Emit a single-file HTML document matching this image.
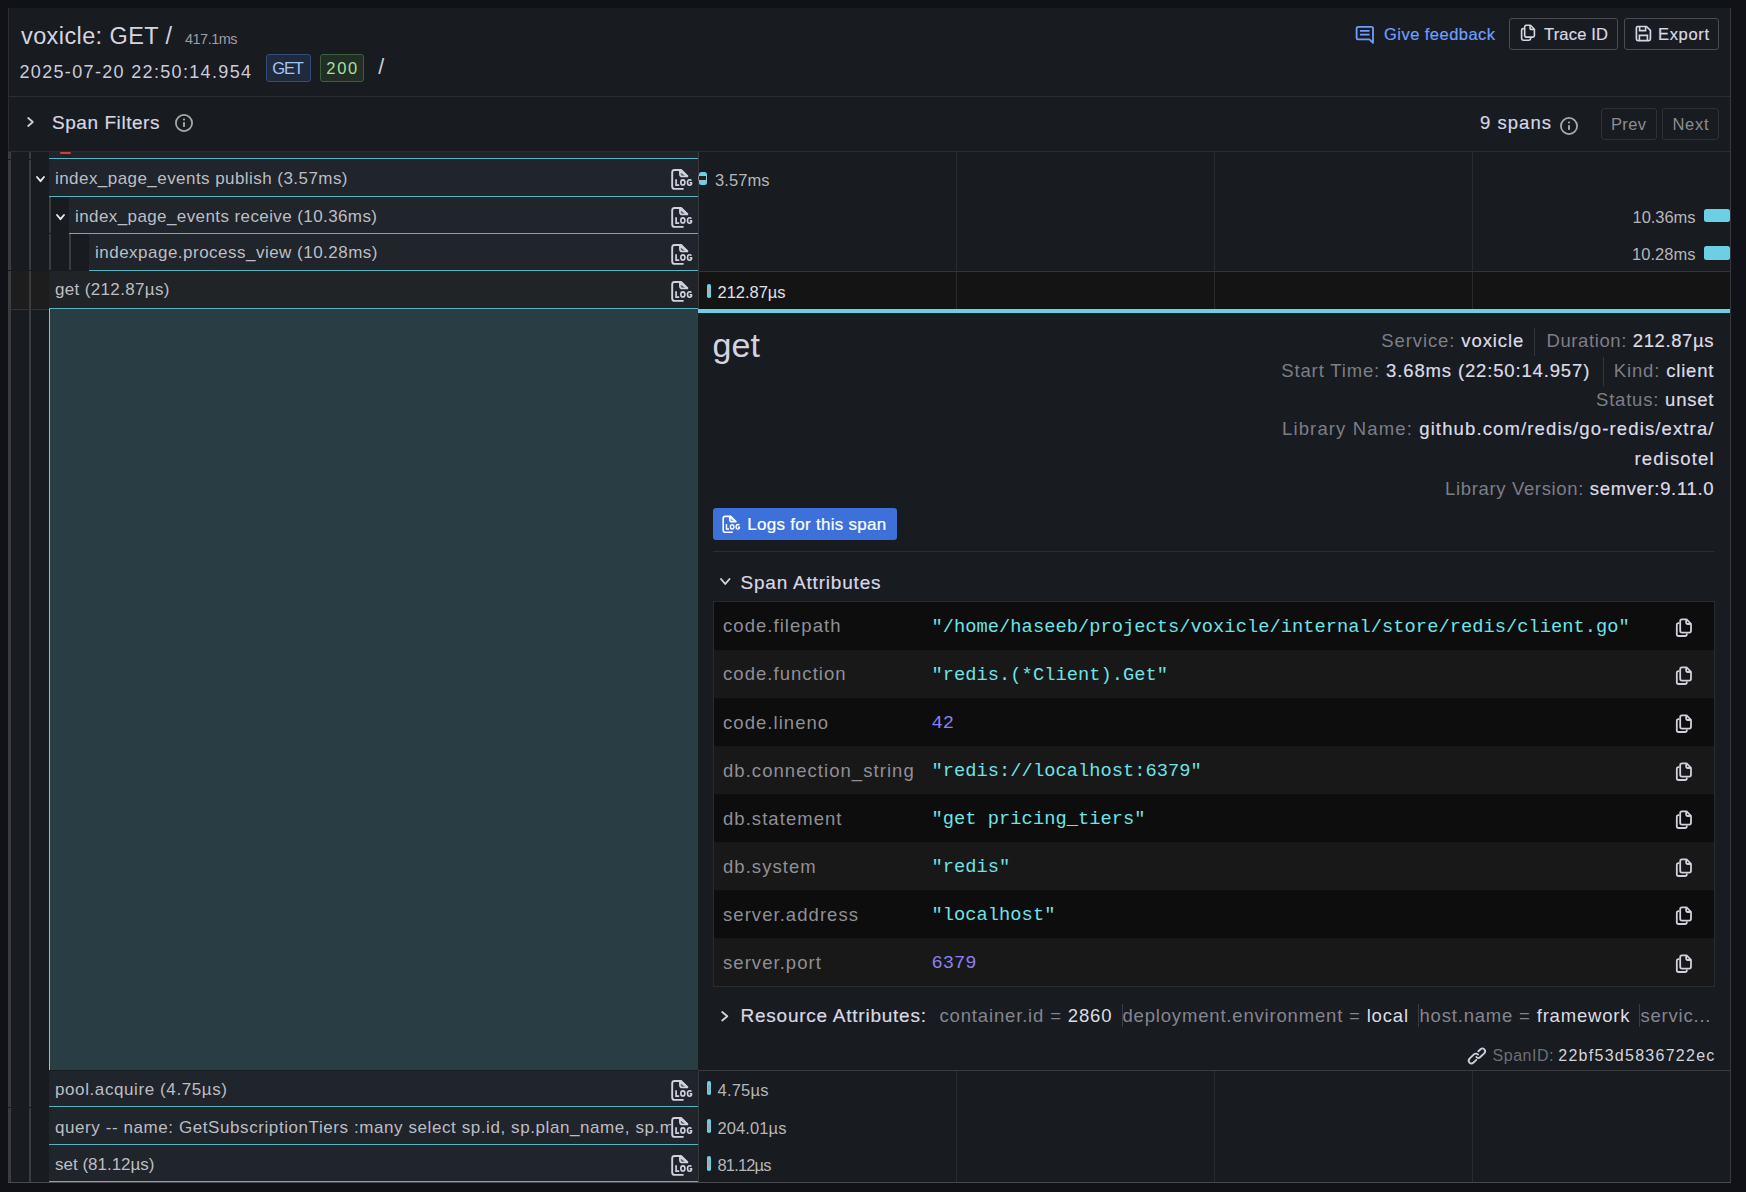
<!DOCTYPE html><html><head><meta charset="utf-8"><style>html,body{margin:0;padding:0;}body{width:1746px;height:1192px;overflow:hidden;background:#111217;position:relative;font-family:"Liberation Sans",sans-serif;}.t{position:absolute;white-space:nowrap;line-height:1;-webkit-font-smoothing:antialiased;}svg{display:block;overflow:visible}</style></head><body>
<div style="position:absolute;left:8px;top:8px;width:1723px;height:1175px;background:#181b1f;"></div>
<div style="position:absolute;left:8px;top:8px;width:1px;height:1175px;background:#2b2d32;"></div>
<div style="position:absolute;left:1730px;top:8px;width:1px;height:1175px;background:#36383c;"></div>
<div class="t" style="left:21.00px;top:24.61px;font-size:23.5px;color:#d4d4e0;letter-spacing:0.397px;font-family:'Liberation Sans',monospace;">voxicle: GET /</div>
<div class="t" style="left:185.00px;top:32.23px;font-size:14.5px;color:#9d9da8;letter-spacing:-0.521px;font-family:'Liberation Sans',monospace;">417.1ms</div>
<div class="t" style="left:19.50px;top:62.76px;font-size:18px;color:#ccccdc;letter-spacing:1.332px;font-family:'Liberation Sans',monospace;">2025-07-20 22:50:14.954</div>
<div style="position:absolute;left:266px;top:54px;width:45px;height:28px;box-sizing:border-box;background:#1f2a3d;border:1px solid #2f4e7e;border-radius:3px;"></div>
<div class="t" style="left:272.30px;top:59.93px;font-size:16.5px;color:#a6c4f5;letter-spacing:-1.211px;font-family:'Liberation Sans',monospace;">GET</div>
<div style="position:absolute;left:320px;top:54px;width:44px;height:28px;box-sizing:border-box;background:#212d25;border:1px solid #38613b;border-radius:3px;"></div>
<div class="t" style="left:326.30px;top:59.93px;font-size:16.5px;color:#a6e09c;letter-spacing:1.734px;font-family:'Liberation Sans',monospace;">200</div>
<div class="t" style="left:378.30px;top:57.00px;font-size:21.5px;color:#d0d0dc;letter-spacing:0.000px;font-family:'Liberation Sans',monospace;">/</div>
<svg style="position:absolute;left:1355px;top:25px;" width="20" height="20" viewBox="0 0 20 20"><path d="M3.2 1.8 H16.4 Q18 1.8 18 3.4 V17.8 L14.4 14.4 H3.2 Q1.6 14.4 1.6 12.8 V3.4 Q1.6 1.8 3.2 1.8 Z" fill="none" stroke="#6e9fff" stroke-width="1.8" stroke-linejoin="round"/><path d="M5 5.8 H14.6 M5 9.6 H14.6" stroke="#6e9fff" stroke-width="1.8"/></svg>
<div class="t" style="left:1384.00px;top:26.03px;font-size:16.5px;color:#6e9fff;letter-spacing:0.460px;font-family:'Liberation Sans',monospace;-webkit-text-stroke:0.2px currentColor;">Give feedback</div>
<div style="position:absolute;left:1509px;top:18px;width:109px;height:32px;box-sizing:border-box;border:1px solid #4a4c52;border-radius:3px;"></div>
<svg style="position:absolute;left:1519.5px;top:24.2px;" width="18" height="19" viewBox="0 0 18 19"><g transform="scale(0.9)" fill="none" stroke="#d6d6e2" stroke-width="1.8" stroke-linejoin="round"><path d="M4.4 5.2 H3.6 Q1.8 5.2 1.8 7 V16.2 Q1.8 18 3.6 18 H10 Q11.8 18 11.8 16.2 V15.6"/><path d="M7 1.4 H11.6 L16 5.8 V12.8 Q16 14.6 14.2 14.6 H7 Q5.2 14.6 5.2 12.8 V3.2 Q5.2 1.4 7 1.4 Z"/><path d="M11.2 1.8 V4.6 Q11.2 6 12.6 6 H15.6"/></g></svg>
<div class="t" style="left:1544.00px;top:26.03px;font-size:16.5px;color:#d8d8e4;letter-spacing:0.192px;font-family:'Liberation Sans',monospace;-webkit-text-stroke:0.2px currentColor;">Trace ID</div>
<div style="position:absolute;left:1624px;top:18px;width:95px;height:32px;box-sizing:border-box;border:1px solid #4a4c52;border-radius:3px;"></div>
<svg style="position:absolute;left:1635px;top:25px;" width="17" height="17" viewBox="0 0 17 17"><path d="M3 1.5 H11.5 L15.4 5.4 V14 Q15.4 15.6 13.8 15.6 H3 Q1.4 15.6 1.4 14 V3.1 Q1.4 1.5 3 1.5 Z" fill="none" stroke="#d6d6e2" stroke-width="1.7" stroke-linejoin="round"/><path d="M4.6 2 V5.6 H10.6 V2" fill="none" stroke="#d6d6e2" stroke-width="1.6"/><path d="M4.4 15.4 V10.4 H12.4 V15.4" fill="none" stroke="#d6d6e2" stroke-width="1.6"/></svg>
<div class="t" style="left:1658.00px;top:26.03px;font-size:16.5px;color:#d8d8e4;letter-spacing:0.662px;font-family:'Liberation Sans',monospace;-webkit-text-stroke:0.2px currentColor;">Export</div>
<div style="position:absolute;left:9px;top:96px;width:1721px;height:1px;background:#2b2d32;"></div>
<svg style="position:absolute;left:27px;top:117px;" width="7" height="10" viewBox="0 0 7 10"><path d="M1.2 1 L5.8 5.0 L1.2 9" fill="none" stroke="#d0d0dc" stroke-width="1.8" stroke-linecap="round" stroke-linejoin="round"/></svg>
<div class="t" style="left:52.00px;top:112.92px;font-size:19px;color:#d6d6e2;letter-spacing:0.557px;font-family:'Liberation Sans',monospace;-webkit-text-stroke:0.2px currentColor;">Span Filters</div>
<svg style="position:absolute;left:174px;top:112.6px;" width="20" height="20" viewBox="0 0 20 20"><circle cx="10" cy="10" r="8.1" fill="none" stroke="#a8a8a8" stroke-width="1.8"/><rect x="9.05" y="8.9" width="1.9" height="5.2" rx="0.9" fill="#a8a8a8"/><circle cx="10" cy="6.5" r="1.1" fill="#a8a8a8"/></svg>
<div class="t" style="left:1480.00px;top:114.14px;font-size:18.5px;color:#d6d6e2;letter-spacing:1.034px;font-family:'Liberation Sans',monospace;-webkit-text-stroke:0.2px currentColor;">9 spans</div>
<svg style="position:absolute;left:1558.5px;top:115.8px;" width="20" height="20" viewBox="0 0 20 20"><circle cx="10" cy="10" r="8.1" fill="none" stroke="#a8a8a8" stroke-width="1.8"/><rect x="9.05" y="8.9" width="1.9" height="5.2" rx="0.9" fill="#a8a8a8"/><circle cx="10" cy="6.5" r="1.1" fill="#a8a8a8"/></svg>
<div style="position:absolute;left:1601px;top:108px;width:56px;height:32px;box-sizing:border-box;border:1px solid #2f3136;border-radius:3px;"></div>
<div class="t" style="left:1611.00px;top:115.53px;font-size:16.5px;color:#8c8c96;letter-spacing:0.354px;font-family:'Liberation Sans',monospace;">Prev</div>
<div style="position:absolute;left:1662px;top:108px;width:57px;height:32px;box-sizing:border-box;border:1px solid #2f3136;border-radius:3px;"></div>
<div class="t" style="left:1672.50px;top:115.53px;font-size:16.5px;color:#8c8c96;letter-spacing:0.688px;font-family:'Liberation Sans',monospace;">Next</div>
<div style="position:absolute;left:9px;top:151px;width:1721px;height:1px;background:#2b2d32;"></div>
<div style="position:absolute;left:956px;top:152px;width:1px;height:1030px;background:#2a2c30;"></div>
<div style="position:absolute;left:1214px;top:152px;width:1px;height:1030px;background:#2a2c30;"></div>
<div style="position:absolute;left:1472px;top:152px;width:1px;height:1030px;background:#2a2c30;"></div>
<div style="position:absolute;left:698px;top:152px;width:1px;height:1030px;background:#38393c;"></div>
<div style="position:absolute;left:8px;top:152px;width:3px;height:1031px;background:#3b3c3e;"></div>
<div style="position:absolute;left:29px;top:152px;width:2px;height:1030px;background:#3b3c3e;"></div>
<div style="position:absolute;left:49px;top:152px;width:649px;height:6px;background:#1f252b;"></div>
<div style="position:absolute;left:60px;top:152px;width:11px;height:1.6px;background:#e0383a;border-radius:1px;"></div>
<div style="position:absolute;left:49px;top:158px;width:649px;height:1.33px;background:#5ab3c2;"></div>
<div style="position:absolute;left:49px;top:159.33px;width:649px;height:36.66999999999999px;background:#1f252b;"></div>
<div style="position:absolute;left:49px;top:196px;width:649px;height:1.33px;background:#5ab3c2;"></div>
<svg style="position:absolute;left:35.7px;top:175.70000000000002px;" width="9" height="6.2" viewBox="0 0 9 6.2"><path d="M1 1 L4.5 5.2 L8 1" fill="none" stroke="#e8e8f0" stroke-width="1.9" stroke-linecap="round" stroke-linejoin="round"/></svg>
<div style="position:absolute;left:49px;top:159.33px;width:622px;height:36.66999999999999px;overflow:hidden">
<div class="t" style="left:6.00px;top:10.18px;font-size:17px;color:#bdbdc3;letter-spacing:0.444px;font-family:'Liberation Sans',monospace;">index_page_events publish (3.57ms)</div>
</div>
<svg style="position:absolute;left:666px;top:165.73000000000002px;" width="30" height="30" viewBox="0 0 30 30"><g transform="scale(1.0)" fill="none" stroke="#d2d2de" stroke-linejoin="round"><path d="M17.6 22.9 H8.6 Q6.2 22.9 6.2 20.5 V6.4 Q6.2 4 8.6 4 H15.1 L21.7 10.4" stroke-width="1.9"/><path d="M13.9 4.8 V8 Q13.9 10.5 16.4 10.5 H21.4 Z" stroke-width="1.7" fill="#d2d2de" fill-opacity="0.35"/><path d="M10.1 13.2 V19.1 H13.2" stroke-width="1.7" stroke-linejoin="miter"/><ellipse cx="16.85" cy="16.45" rx="2.05" ry="2.6" stroke-width="1.6"/><path d="M25.4 14.6 Q24.9 13.7 23.6 13.7 Q21.5 13.7 21.5 16.45 Q21.5 19.2 23.6 19.2 Q25.6 19.2 25.6 16.8 H23.7" stroke-width="1.6"/></g></svg>
<div style="position:absolute;left:49px;top:197.33px;width:2px;height:36px;background:#3b3c3e;"></div>
<div style="position:absolute;left:69px;top:197.33px;width:629px;height:35.66999999999999px;background:#1f252b;"></div>
<div style="position:absolute;left:69px;top:233px;width:629px;height:1.33px;background:#5ab3c2;"></div>
<svg style="position:absolute;left:55.7px;top:213.70000000000002px;" width="9" height="6.2" viewBox="0 0 9 6.2"><path d="M1 1 L4.5 5.2 L8 1" fill="none" stroke="#e8e8f0" stroke-width="1.9" stroke-linecap="round" stroke-linejoin="round"/></svg>
<div style="position:absolute;left:69px;top:197.33px;width:602px;height:35.66999999999999px;overflow:hidden">
<div class="t" style="left:6.00px;top:10.18px;font-size:17px;color:#bdbdc3;letter-spacing:0.405px;font-family:'Liberation Sans',monospace;">index_page_events receive (10.36ms)</div>
</div>
<svg style="position:absolute;left:666px;top:203.73000000000002px;" width="30" height="30" viewBox="0 0 30 30"><g transform="scale(1.0)" fill="none" stroke="#d2d2de" stroke-linejoin="round"><path d="M17.6 22.9 H8.6 Q6.2 22.9 6.2 20.5 V6.4 Q6.2 4 8.6 4 H15.1 L21.7 10.4" stroke-width="1.9"/><path d="M13.9 4.8 V8 Q13.9 10.5 16.4 10.5 H21.4 Z" stroke-width="1.7" fill="#d2d2de" fill-opacity="0.35"/><path d="M10.1 13.2 V19.1 H13.2" stroke-width="1.7" stroke-linejoin="miter"/><ellipse cx="16.85" cy="16.45" rx="2.05" ry="2.6" stroke-width="1.6"/><path d="M25.4 14.6 Q24.9 13.7 23.6 13.7 Q21.5 13.7 21.5 16.45 Q21.5 19.2 23.6 19.2 Q25.6 19.2 25.6 16.8 H23.7" stroke-width="1.6"/></g></svg>
<div style="position:absolute;left:49px;top:234.33px;width:2px;height:36px;background:#3b3c3e;"></div>
<div style="position:absolute;left:69px;top:234.33px;width:2px;height:36px;background:#3b3c3e;"></div>
<div style="position:absolute;left:89px;top:234.33px;width:609px;height:35.66999999999999px;background:#1f252b;"></div>
<div style="position:absolute;left:89px;top:270px;width:609px;height:1.33px;background:#5ab3c2;"></div>
<div style="position:absolute;left:89px;top:234.33px;width:582px;height:35.66999999999999px;overflow:hidden">
<div class="t" style="left:6.00px;top:9.98px;font-size:17px;color:#bdbdc3;letter-spacing:0.486px;font-family:'Liberation Sans',monospace;">indexpage.process_view (10.28ms)</div>
</div>
<svg style="position:absolute;left:666px;top:240.73000000000002px;" width="30" height="30" viewBox="0 0 30 30"><g transform="scale(1.0)" fill="none" stroke="#d2d2de" stroke-linejoin="round"><path d="M17.6 22.9 H8.6 Q6.2 22.9 6.2 20.5 V6.4 Q6.2 4 8.6 4 H15.1 L21.7 10.4" stroke-width="1.9"/><path d="M13.9 4.8 V8 Q13.9 10.5 16.4 10.5 H21.4 Z" stroke-width="1.7" fill="#d2d2de" fill-opacity="0.35"/><path d="M10.1 13.2 V19.1 H13.2" stroke-width="1.7" stroke-linejoin="miter"/><ellipse cx="16.85" cy="16.45" rx="2.05" ry="2.6" stroke-width="1.6"/><path d="M25.4 14.6 Q24.9 13.7 23.6 13.7 Q21.5 13.7 21.5 16.45 Q21.5 19.2 23.6 19.2 Q25.6 19.2 25.6 16.8 H23.7" stroke-width="1.6"/></g></svg>
<div style="position:absolute;left:11px;top:271.33px;width:18px;height:37px;background:#1d1d1d;"></div>
<div style="position:absolute;left:31px;top:271.33px;width:18px;height:37px;background:#1d1d1d;"></div>
<div style="position:absolute;left:11px;top:309px;width:38px;height:1px;background:#343434;"></div>
<div style="position:absolute;left:49px;top:271.33px;width:649px;height:36.67px;background:#202427;"></div>
<div style="position:absolute;left:49px;top:308px;width:649px;height:1.33px;background:#5ab3c2;"></div>
<div class="t" style="left:55.00px;top:281.41px;font-size:17px;color:#bdbdc3;letter-spacing:0.349px;font-family:'Liberation Sans',monospace;">get (212.87µs)</div>
<svg style="position:absolute;left:666px;top:277.6px;" width="30" height="30" viewBox="0 0 30 30"><g transform="scale(1.0)" fill="none" stroke="#d2d2de" stroke-linejoin="round"><path d="M17.6 22.9 H8.6 Q6.2 22.9 6.2 20.5 V6.4 Q6.2 4 8.6 4 H15.1 L21.7 10.4" stroke-width="1.9"/><path d="M13.9 4.8 V8 Q13.9 10.5 16.4 10.5 H21.4 Z" stroke-width="1.7" fill="#d2d2de" fill-opacity="0.35"/><path d="M10.1 13.2 V19.1 H13.2" stroke-width="1.7" stroke-linejoin="miter"/><ellipse cx="16.85" cy="16.45" rx="2.05" ry="2.6" stroke-width="1.6"/><path d="M25.4 14.6 Q24.9 13.7 23.6 13.7 Q21.5 13.7 21.5 16.45 Q21.5 19.2 23.6 19.2 Q25.6 19.2 25.6 16.8 H23.7" stroke-width="1.6"/></g></svg>
<div style="position:absolute;left:699px;top:272px;width:1031px;height:36.5px;background:#141414;"></div>
<div style="position:absolute;left:956px;top:272px;width:1px;height:36.5px;background:#2a2a2a;"></div>
<div style="position:absolute;left:1214px;top:272px;width:1px;height:36.5px;background:#2a2a2a;"></div>
<div style="position:absolute;left:1472px;top:272px;width:1px;height:36.5px;background:#2a2a2a;"></div>
<div style="position:absolute;left:699px;top:271px;width:1031px;height:1px;background:#333437;"></div>
<div style="position:absolute;left:698.5px;top:172.2px;width:8.6px;height:12.6px;background:#6ccfe3;border-radius:2.5px;"></div>
<div style="position:absolute;left:699.4px;top:176px;width:6.8px;height:4px;background:#222;box-shadow:0 0 0 0.6px #bbb;"></div>
<div class="t" style="left:715.00px;top:172.03px;font-size:16.5px;color:#b6b6b8;letter-spacing:0.078px;font-family:'Liberation Sans',monospace;">3.57ms</div>
<div class="t" style="right:50.55px;top:208.83px;font-size:16.5px;color:#b6b6b8;letter-spacing:-0.049px;font-family:'Liberation Sans',monospace;">10.36ms</div>
<div style="position:absolute;left:1704px;top:209px;width:26.3px;height:13px;background:#6ccfe3;border-radius:2.5px;"></div>
<div class="t" style="right:50.47px;top:246.03px;font-size:16.5px;color:#b6b6b8;letter-spacing:0.034px;font-family:'Liberation Sans',monospace;">10.28ms</div>
<div style="position:absolute;left:1704px;top:246.3px;width:26.3px;height:13.7px;background:#6ccfe3;border-radius:2.5px;"></div>
<div style="position:absolute;left:707px;top:284px;width:3.6px;height:13.5px;background:#6ccfe3;border-radius:1.8px;"></div>
<div style="position:absolute;left:708px;top:288px;width:1.6px;height:6px;background:#b0b0b0;"></div>
<div class="t" style="left:717.50px;top:283.53px;font-size:16.5px;color:#e0e0e6;letter-spacing:-0.033px;font-family:'Liberation Sans',monospace;">212.87µs</div>
<div style="position:absolute;left:49px;top:309.4px;width:649px;height:760.6px;background:#293d44;"></div>
<div style="position:absolute;left:49px;top:309.4px;width:1.2px;height:760.6px;background:#6ccfe3;"></div>
<div style="position:absolute;left:698px;top:309.4px;width:1032px;height:760.6px;background:#181b1f;"></div>
<div style="position:absolute;left:698px;top:309px;width:1032px;height:4px;background:#6ccfe3;"></div>
<div style="position:absolute;left:698px;top:1069.5px;width:1032px;height:1px;background:#3a3b3e;"></div>
<div class="t" style="left:712.50px;top:328.32px;font-size:34px;color:#d4d4e0;letter-spacing:0.117px;font-family:'Liberation Sans',monospace;">get</div>
<div class="t" style="left:1381.30px;top:332.04px;font-size:18.5px;color:#dcdce6;letter-spacing:0.898px;font-family:'Liberation Sans',monospace;"><span style="color:#7e7e87">Service:</span> <span style="color:#dcdce6;-webkit-text-stroke:0.2px #dcdce6">voxicle</span></div>
<div style="position:absolute;left:1534px;top:327.5px;width:1px;height:28.5px;background:#33353a;"></div>
<div class="t" style="left:1546.50px;top:332.04px;font-size:18.5px;color:#dcdce6;letter-spacing:0.605px;font-family:'Liberation Sans',monospace;"><span style="color:#7e7e87">Duration:</span> <span style="color:#dcdce6;-webkit-text-stroke:0.2px #dcdce6">212.87µs</span></div>
<div class="t" style="left:1281.30px;top:361.94px;font-size:18.5px;color:#dcdce6;letter-spacing:0.852px;font-family:'Liberation Sans',monospace;"><span style="color:#7e7e87">Start Time:</span> <span style="color:#dcdce6;-webkit-text-stroke:0.2px #dcdce6">3.68ms (22:50:14.957)</span></div>
<div style="position:absolute;left:1602.5px;top:356.5px;width:1px;height:29.5px;background:#33353a;"></div>
<div class="t" style="left:1613.80px;top:361.94px;font-size:18.5px;color:#dcdce6;letter-spacing:0.835px;font-family:'Liberation Sans',monospace;"><span style="color:#7e7e87">Kind:</span> <span style="color:#dcdce6;-webkit-text-stroke:0.2px #dcdce6">client</span></div>
<div class="t" style="left:1596.00px;top:390.94px;font-size:18.5px;color:#dcdce6;letter-spacing:0.792px;font-family:'Liberation Sans',monospace;"><span style="color:#7e7e87">Status:</span> <span style="color:#dcdce6;-webkit-text-stroke:0.2px #dcdce6">unset</span></div>
<div class="t" style="left:1282.00px;top:420.24px;font-size:18.5px;color:#dcdce6;letter-spacing:1.134px;font-family:'Liberation Sans',monospace;"><span style="color:#7e7e87">Library Name:</span> <span style="color:#dcdce6;-webkit-text-stroke:0.2px #dcdce6">github.com/redis/go-redis/extra/</span></div>
<div class="t" style="left:1634.50px;top:450.04px;font-size:18.5px;color:#dcdce6;letter-spacing:1.133px;font-family:'Liberation Sans',monospace;-webkit-text-stroke:0.2px currentColor;">redisotel</div>
<div class="t" style="left:1445.00px;top:479.54px;font-size:18.5px;color:#dcdce6;letter-spacing:0.654px;font-family:'Liberation Sans',monospace;"><span style="color:#7e7e87">Library Version:</span> <span style="color:#dcdce6;-webkit-text-stroke:0.2px #dcdce6">semver:9.11.0</span></div>
<div style="position:absolute;left:713px;top:508.2px;width:184px;height:31.6px;background:#3d71d9;border-radius:3px;"></div>
<svg style="position:absolute;left:718px;top:512.5px;" width="25" height="25" viewBox="0 0 25 25"><g transform="scale(0.84)" fill="none" stroke="#ffffff" stroke-linejoin="round"><path d="M17.6 22.9 H8.6 Q6.2 22.9 6.2 20.5 V6.4 Q6.2 4 8.6 4 H15.1 L21.7 10.4" stroke-width="1.9"/><path d="M13.9 4.8 V8 Q13.9 10.5 16.4 10.5 H21.4 Z" stroke-width="1.7" fill="#ffffff" fill-opacity="0.35"/><path d="M10.1 13.2 V19.1 H13.2" stroke-width="1.7" stroke-linejoin="miter"/><ellipse cx="16.85" cy="16.45" rx="2.05" ry="2.6" stroke-width="1.6"/><path d="M25.4 14.6 Q24.9 13.7 23.6 13.7 Q21.5 13.7 21.5 16.45 Q21.5 19.2 23.6 19.2 Q25.6 19.2 25.6 16.8 H23.7" stroke-width="1.6"/></g></svg>
<div class="t" style="left:747.30px;top:515.71px;font-size:17px;color:#ffffff;letter-spacing:0.282px;font-family:'Liberation Sans',monospace;-webkit-text-stroke:0.2px currentColor;">Logs for this span</div>
<div style="position:absolute;left:713px;top:551px;width:1001px;height:1px;background:#2c2e33;"></div>
<svg style="position:absolute;left:719.5px;top:577.6px;" width="10.5" height="7" viewBox="0 0 10.5 7"><path d="M1 1 L5.25 6 L9.5 1" fill="none" stroke="#d4d4e0" stroke-width="1.9" stroke-linecap="round" stroke-linejoin="round"/></svg>
<div class="t" style="left:740.50px;top:572.52px;font-size:19px;color:#d8d8e4;letter-spacing:0.795px;font-family:'Liberation Sans',monospace;-webkit-text-stroke:0.2px currentColor;">Span Attributes</div>
<div style="position:absolute;left:713px;top:600.5px;width:1002px;height:386.64px;box-sizing:border-box;border:1px solid #2a2b2e;"></div>
<div style="position:absolute;left:714px;top:601.5px;width:1000px;height:48.08px;background:#0d0d0d;"></div>
<div class="t" style="left:723.00px;top:617.34px;font-size:18.5px;color:#8f8f96;letter-spacing:1.050px;font-family:'Liberation Sans',monospace;">code.filepath</div>
<div class="t" style="left:931.50px;top:617.93px;font-size:18.7px;color:#6fe3e6;letter-spacing:0.050px;font-family:'Liberation Mono',monospace;">&quot;/home/haseeb/projects/voxicle/internal/store/redis/client.go&quot;</div>
<svg style="position:absolute;left:1675.3px;top:617.7px;" width="20" height="21" viewBox="0 0 20 21"><g transform="scale(1.0)" fill="none" stroke="#d0d0de" stroke-width="1.8" stroke-linejoin="round"><path d="M4.4 5.2 H3.6 Q1.8 5.2 1.8 7 V16.2 Q1.8 18 3.6 18 H10 Q11.8 18 11.8 16.2 V15.6"/><path d="M7 1.4 H11.6 L16 5.8 V12.8 Q16 14.6 14.2 14.6 H7 Q5.2 14.6 5.2 12.8 V3.2 Q5.2 1.4 7 1.4 Z"/><path d="M11.2 1.8 V4.6 Q11.2 6 12.6 6 H15.6"/></g></svg>
<div style="position:absolute;left:714px;top:649.58px;width:1000px;height:48.08px;background:#181818;"></div>
<div class="t" style="left:723.00px;top:665.42px;font-size:18.5px;color:#8f8f96;letter-spacing:1.050px;font-family:'Liberation Sans',monospace;">code.function</div>
<div class="t" style="left:931.50px;top:666.01px;font-size:18.7px;color:#6fe3e6;letter-spacing:0.050px;font-family:'Liberation Mono',monospace;">&quot;redis.(*Client).Get&quot;</div>
<svg style="position:absolute;left:1675.3px;top:665.7800000000001px;" width="20" height="21" viewBox="0 0 20 21"><g transform="scale(1.0)" fill="none" stroke="#d0d0de" stroke-width="1.8" stroke-linejoin="round"><path d="M4.4 5.2 H3.6 Q1.8 5.2 1.8 7 V16.2 Q1.8 18 3.6 18 H10 Q11.8 18 11.8 16.2 V15.6"/><path d="M7 1.4 H11.6 L16 5.8 V12.8 Q16 14.6 14.2 14.6 H7 Q5.2 14.6 5.2 12.8 V3.2 Q5.2 1.4 7 1.4 Z"/><path d="M11.2 1.8 V4.6 Q11.2 6 12.6 6 H15.6"/></g></svg>
<div style="position:absolute;left:714px;top:697.66px;width:1000px;height:48.08px;background:#0d0d0d;"></div>
<div class="t" style="left:723.00px;top:713.50px;font-size:18.5px;color:#8f8f96;letter-spacing:1.050px;font-family:'Liberation Sans',monospace;">code.lineno</div>
<div class="t" style="left:931.50px;top:714.09px;font-size:18.7px;color:#8a80f2;letter-spacing:0.050px;font-family:'Liberation Mono',monospace;">42</div>
<svg style="position:absolute;left:1675.3px;top:713.86px;" width="20" height="21" viewBox="0 0 20 21"><g transform="scale(1.0)" fill="none" stroke="#d0d0de" stroke-width="1.8" stroke-linejoin="round"><path d="M4.4 5.2 H3.6 Q1.8 5.2 1.8 7 V16.2 Q1.8 18 3.6 18 H10 Q11.8 18 11.8 16.2 V15.6"/><path d="M7 1.4 H11.6 L16 5.8 V12.8 Q16 14.6 14.2 14.6 H7 Q5.2 14.6 5.2 12.8 V3.2 Q5.2 1.4 7 1.4 Z"/><path d="M11.2 1.8 V4.6 Q11.2 6 12.6 6 H15.6"/></g></svg>
<div style="position:absolute;left:714px;top:745.74px;width:1000px;height:48.08px;background:#181818;"></div>
<div class="t" style="left:723.00px;top:761.58px;font-size:18.5px;color:#8f8f96;letter-spacing:1.050px;font-family:'Liberation Sans',monospace;">db.connection_string</div>
<div class="t" style="left:931.50px;top:762.17px;font-size:18.7px;color:#6fe3e6;letter-spacing:0.050px;font-family:'Liberation Mono',monospace;">&quot;redis://localhost:6379&quot;</div>
<svg style="position:absolute;left:1675.3px;top:761.94px;" width="20" height="21" viewBox="0 0 20 21"><g transform="scale(1.0)" fill="none" stroke="#d0d0de" stroke-width="1.8" stroke-linejoin="round"><path d="M4.4 5.2 H3.6 Q1.8 5.2 1.8 7 V16.2 Q1.8 18 3.6 18 H10 Q11.8 18 11.8 16.2 V15.6"/><path d="M7 1.4 H11.6 L16 5.8 V12.8 Q16 14.6 14.2 14.6 H7 Q5.2 14.6 5.2 12.8 V3.2 Q5.2 1.4 7 1.4 Z"/><path d="M11.2 1.8 V4.6 Q11.2 6 12.6 6 H15.6"/></g></svg>
<div style="position:absolute;left:714px;top:793.8199999999999px;width:1000px;height:48.08px;background:#0d0d0d;"></div>
<div class="t" style="left:723.00px;top:809.66px;font-size:18.5px;color:#8f8f96;letter-spacing:1.050px;font-family:'Liberation Sans',monospace;">db.statement</div>
<div class="t" style="left:931.50px;top:810.25px;font-size:18.7px;color:#6fe3e6;letter-spacing:0.050px;font-family:'Liberation Mono',monospace;">&quot;get pricing_tiers&quot;</div>
<svg style="position:absolute;left:1675.3px;top:810.02px;" width="20" height="21" viewBox="0 0 20 21"><g transform="scale(1.0)" fill="none" stroke="#d0d0de" stroke-width="1.8" stroke-linejoin="round"><path d="M4.4 5.2 H3.6 Q1.8 5.2 1.8 7 V16.2 Q1.8 18 3.6 18 H10 Q11.8 18 11.8 16.2 V15.6"/><path d="M7 1.4 H11.6 L16 5.8 V12.8 Q16 14.6 14.2 14.6 H7 Q5.2 14.6 5.2 12.8 V3.2 Q5.2 1.4 7 1.4 Z"/><path d="M11.2 1.8 V4.6 Q11.2 6 12.6 6 H15.6"/></g></svg>
<div style="position:absolute;left:714px;top:841.9px;width:1000px;height:48.08px;background:#181818;"></div>
<div class="t" style="left:723.00px;top:857.74px;font-size:18.5px;color:#8f8f96;letter-spacing:1.050px;font-family:'Liberation Sans',monospace;">db.system</div>
<div class="t" style="left:931.50px;top:858.33px;font-size:18.7px;color:#6fe3e6;letter-spacing:0.050px;font-family:'Liberation Mono',monospace;">&quot;redis&quot;</div>
<svg style="position:absolute;left:1675.3px;top:858.1px;" width="20" height="21" viewBox="0 0 20 21"><g transform="scale(1.0)" fill="none" stroke="#d0d0de" stroke-width="1.8" stroke-linejoin="round"><path d="M4.4 5.2 H3.6 Q1.8 5.2 1.8 7 V16.2 Q1.8 18 3.6 18 H10 Q11.8 18 11.8 16.2 V15.6"/><path d="M7 1.4 H11.6 L16 5.8 V12.8 Q16 14.6 14.2 14.6 H7 Q5.2 14.6 5.2 12.8 V3.2 Q5.2 1.4 7 1.4 Z"/><path d="M11.2 1.8 V4.6 Q11.2 6 12.6 6 H15.6"/></g></svg>
<div style="position:absolute;left:714px;top:889.98px;width:1000px;height:48.08px;background:#0d0d0d;"></div>
<div class="t" style="left:723.00px;top:905.82px;font-size:18.5px;color:#8f8f96;letter-spacing:1.050px;font-family:'Liberation Sans',monospace;">server.address</div>
<div class="t" style="left:931.50px;top:906.41px;font-size:18.7px;color:#6fe3e6;letter-spacing:0.050px;font-family:'Liberation Mono',monospace;">&quot;localhost&quot;</div>
<svg style="position:absolute;left:1675.3px;top:906.1800000000001px;" width="20" height="21" viewBox="0 0 20 21"><g transform="scale(1.0)" fill="none" stroke="#d0d0de" stroke-width="1.8" stroke-linejoin="round"><path d="M4.4 5.2 H3.6 Q1.8 5.2 1.8 7 V16.2 Q1.8 18 3.6 18 H10 Q11.8 18 11.8 16.2 V15.6"/><path d="M7 1.4 H11.6 L16 5.8 V12.8 Q16 14.6 14.2 14.6 H7 Q5.2 14.6 5.2 12.8 V3.2 Q5.2 1.4 7 1.4 Z"/><path d="M11.2 1.8 V4.6 Q11.2 6 12.6 6 H15.6"/></g></svg>
<div style="position:absolute;left:714px;top:938.06px;width:1000px;height:48.08px;background:#181818;"></div>
<div class="t" style="left:723.00px;top:953.90px;font-size:18.5px;color:#8f8f96;letter-spacing:1.050px;font-family:'Liberation Sans',monospace;">server.port</div>
<div class="t" style="left:931.50px;top:954.49px;font-size:18.7px;color:#8a80f2;letter-spacing:0.050px;font-family:'Liberation Mono',monospace;">6379</div>
<svg style="position:absolute;left:1675.3px;top:954.26px;" width="20" height="21" viewBox="0 0 20 21"><g transform="scale(1.0)" fill="none" stroke="#d0d0de" stroke-width="1.8" stroke-linejoin="round"><path d="M4.4 5.2 H3.6 Q1.8 5.2 1.8 7 V16.2 Q1.8 18 3.6 18 H10 Q11.8 18 11.8 16.2 V15.6"/><path d="M7 1.4 H11.6 L16 5.8 V12.8 Q16 14.6 14.2 14.6 H7 Q5.2 14.6 5.2 12.8 V3.2 Q5.2 1.4 7 1.4 Z"/><path d="M11.2 1.8 V4.6 Q11.2 6 12.6 6 H15.6"/></g></svg>
<svg style="position:absolute;left:721px;top:1010.5px;" width="7.5" height="10.5" viewBox="0 0 7.5 10.5"><path d="M1.2 1 L6.3 5.25 L1.2 9.5" fill="none" stroke="#d4d4e0" stroke-width="1.8" stroke-linecap="round" stroke-linejoin="round"/></svg>
<div class="t" style="left:740.50px;top:1005.92px;font-size:19px;color:#d8d8e4;letter-spacing:0.758px;font-family:'Liberation Sans',monospace;-webkit-text-stroke:0.2px currentColor;">Resource Attributes:</div>
<div class="t" style="left:939.50px;top:1006.84px;font-size:18.5px;color:#85858f;letter-spacing:0.840px;font-family:'Liberation Sans',monospace;"><span style="color:#85858f">container.id = </span><span style="color:#dcdce6">2860</span></div>
<div style="position:absolute;left:1121.5px;top:1004px;width:1px;height:23px;background:#3a3c40;"></div>
<div class="t" style="left:1122.50px;top:1006.84px;font-size:18.5px;color:#85858f;letter-spacing:0.820px;font-family:'Liberation Sans',monospace;"><span style="color:#85858f">deployment.environment = </span><span style="color:#dcdce6">local</span></div>
<div style="position:absolute;left:1418px;top:1004px;width:1px;height:23px;background:#3a3c40;"></div>
<div class="t" style="left:1419.50px;top:1006.84px;font-size:18.5px;color:#85858f;letter-spacing:0.809px;font-family:'Liberation Sans',monospace;"><span style="color:#85858f">host.name = </span><span style="color:#dcdce6">framework</span></div>
<div style="position:absolute;left:1639.4px;top:1004px;width:1px;height:23px;background:#3a3c40;"></div>
<div class="t" style="left:1640.50px;top:1006.84px;font-size:18.5px;color:#85858f;letter-spacing:0.783px;font-family:'Liberation Sans',monospace;"><span style="color:#85858f">servic...</span></div>
<svg style="position:absolute;left:1460px;top:1040px;" width="40" height="30" viewBox="0 0 40 30"><g transform="translate(16.9 15.9) scale(0.8) translate(-16 -15.9)"><path d="M15.3 20.9 L11.8 24.2 Q9.1 26.6 6.7 24.2 Q4.4 21.6 7.1 19 L11.9 14.3 Q14.6 11.9 17.4 14.2" fill="none" stroke="#cfcfdc" stroke-width="2.35" stroke-linecap="round"/><path d="M17.8 10.1 L20.6 7.6 Q23.3 5.3 25.5 7.9 Q27.5 10.5 24.8 13.1 L19.9 17.6 Q17.2 19.9 15.3 17.3" fill="none" stroke="#cfcfdc" stroke-width="2.35" stroke-linecap="round"/></g></svg>
<div class="t" style="left:1492.50px;top:1047.86px;font-size:16px;color:#6f6f78;letter-spacing:0.531px;font-family:'Liberation Sans',monospace;">SpanID:</div>
<div class="t" style="left:1558.30px;top:1047.86px;font-size:16px;color:#d4d4de;letter-spacing:1.265px;font-family:'Liberation Sans',monospace;">22bf53d5836722ec</div>
<div style="position:absolute;left:8px;top:158.6px;width:3px;height:1px;background:#17191c;"></div>
<div style="position:absolute;left:29px;top:158.6px;width:2px;height:1px;background:#17191c;"></div>
<div style="position:absolute;left:8px;top:270.3px;width:3px;height:1px;background:#17191c;"></div>
<div style="position:absolute;left:29px;top:270.3px;width:2px;height:1px;background:#17191c;"></div>
<div style="position:absolute;left:8px;top:1106.6px;width:3px;height:1px;background:#17191c;"></div>
<div style="position:absolute;left:29px;top:1106.6px;width:2px;height:1px;background:#17191c;"></div>
<div style="position:absolute;left:956px;top:1071px;width:1px;height:111px;background:#2a2c30;"></div>
<div style="position:absolute;left:1214px;top:1071px;width:1px;height:111px;background:#2a2c30;"></div>
<div style="position:absolute;left:1472px;top:1071px;width:1px;height:111px;background:#2a2c30;"></div>
<div style="position:absolute;left:49px;top:1071px;width:649px;height:35px;background:#1f252b;"></div>
<div style="position:absolute;left:49px;top:1106px;width:649px;height:1.33px;background:#5ab3c2;"></div>
<div style="position:absolute;left:49px;top:1071px;width:622px;height:35px;overflow:hidden">
<div class="t" style="left:6.00px;top:9.61px;font-size:17px;color:#bdbdc3;letter-spacing:0.597px;font-family:'Liberation Sans',monospace;">pool.acquire (4.75µs)</div>
</div>
<svg style="position:absolute;left:666px;top:1077.4px;" width="30" height="30" viewBox="0 0 30 30"><g transform="scale(1.0)" fill="none" stroke="#d2d2de" stroke-linejoin="round"><path d="M17.6 22.9 H8.6 Q6.2 22.9 6.2 20.5 V6.4 Q6.2 4 8.6 4 H15.1 L21.7 10.4" stroke-width="1.9"/><path d="M13.9 4.8 V8 Q13.9 10.5 16.4 10.5 H21.4 Z" stroke-width="1.7" fill="#d2d2de" fill-opacity="0.35"/><path d="M10.1 13.2 V19.1 H13.2" stroke-width="1.7" stroke-linejoin="miter"/><ellipse cx="16.85" cy="16.45" rx="2.05" ry="2.6" stroke-width="1.6"/><path d="M25.4 14.6 Q24.9 13.7 23.6 13.7 Q21.5 13.7 21.5 16.45 Q21.5 19.2 23.6 19.2 Q25.6 19.2 25.6 16.8 H23.7" stroke-width="1.6"/></g></svg>
<div style="position:absolute;left:707px;top:1080.8px;width:3.6px;height:14.5px;background:#6ccfe3;border-radius:1.8px;"></div>
<div style="position:absolute;left:708px;top:1084.5px;width:1.6px;height:7px;background:#a8a8a8;"></div>
<div class="t" style="left:717.50px;top:1081.93px;font-size:16.5px;color:#b6b6b8;letter-spacing:0.225px;font-family:'Liberation Sans',monospace;">4.75µs</div>
<div style="position:absolute;left:49px;top:1107.33px;width:649px;height:36.67000000000007px;background:#1f252b;"></div>
<div style="position:absolute;left:49px;top:1144px;width:649px;height:1.33px;background:#5ab3c2;"></div>
<div style="position:absolute;left:49px;top:1107.33px;width:622px;height:36.67000000000007px;overflow:hidden">
<div class="t" style="left:6.00px;top:11.28px;font-size:17px;color:#bdbdc3;letter-spacing:0.580px;font-family:'Liberation Sans',monospace;">query -- name: GetSubscriptionTiers :many select sp.id, sp.plan_name, sp.monthly_price</div>
</div>
<svg style="position:absolute;left:666px;top:1113.73px;" width="30" height="30" viewBox="0 0 30 30"><g transform="scale(1.0)" fill="none" stroke="#d2d2de" stroke-linejoin="round"><path d="M17.6 22.9 H8.6 Q6.2 22.9 6.2 20.5 V6.4 Q6.2 4 8.6 4 H15.1 L21.7 10.4" stroke-width="1.9"/><path d="M13.9 4.8 V8 Q13.9 10.5 16.4 10.5 H21.4 Z" stroke-width="1.7" fill="#d2d2de" fill-opacity="0.35"/><path d="M10.1 13.2 V19.1 H13.2" stroke-width="1.7" stroke-linejoin="miter"/><ellipse cx="16.85" cy="16.45" rx="2.05" ry="2.6" stroke-width="1.6"/><path d="M25.4 14.6 Q24.9 13.7 23.6 13.7 Q21.5 13.7 21.5 16.45 Q21.5 19.2 23.6 19.2 Q25.6 19.2 25.6 16.8 H23.7" stroke-width="1.6"/></g></svg>
<div style="position:absolute;left:707px;top:1118.8px;width:3.6px;height:14.5px;background:#6ccfe3;border-radius:1.8px;"></div>
<div style="position:absolute;left:708px;top:1122.5px;width:1.6px;height:7px;background:#a8a8a8;"></div>
<div class="t" style="left:717.50px;top:1119.73px;font-size:16.5px;color:#b6b6b8;letter-spacing:0.109px;font-family:'Liberation Sans',monospace;">204.01µs</div>
<div style="position:absolute;left:49px;top:1145.33px;width:649px;height:35.67000000000007px;background:#1f252b;"></div>
<div style="position:absolute;left:49px;top:1181px;width:649px;height:1.33px;background:#5ab3c2;"></div>
<div style="position:absolute;left:49px;top:1145.33px;width:622px;height:35.67000000000007px;overflow:hidden">
<div class="t" style="left:6.00px;top:10.78px;font-size:17px;color:#bdbdc3;letter-spacing:-0.005px;font-family:'Liberation Sans',monospace;">set (81.12µs)</div>
</div>
<svg style="position:absolute;left:666px;top:1151.73px;" width="30" height="30" viewBox="0 0 30 30"><g transform="scale(1.0)" fill="none" stroke="#d2d2de" stroke-linejoin="round"><path d="M17.6 22.9 H8.6 Q6.2 22.9 6.2 20.5 V6.4 Q6.2 4 8.6 4 H15.1 L21.7 10.4" stroke-width="1.9"/><path d="M13.9 4.8 V8 Q13.9 10.5 16.4 10.5 H21.4 Z" stroke-width="1.7" fill="#d2d2de" fill-opacity="0.35"/><path d="M10.1 13.2 V19.1 H13.2" stroke-width="1.7" stroke-linejoin="miter"/><ellipse cx="16.85" cy="16.45" rx="2.05" ry="2.6" stroke-width="1.6"/><path d="M25.4 14.6 Q24.9 13.7 23.6 13.7 Q21.5 13.7 21.5 16.45 Q21.5 19.2 23.6 19.2 Q25.6 19.2 25.6 16.8 H23.7" stroke-width="1.6"/></g></svg>
<div style="position:absolute;left:707px;top:1156.3px;width:3.6px;height:14.5px;background:#6ccfe3;border-radius:1.8px;"></div>
<div style="position:absolute;left:708px;top:1160.0px;width:1.6px;height:7px;background:#a8a8a8;"></div>
<div class="t" style="left:717.50px;top:1157.03px;font-size:16.5px;color:#b6b6b8;letter-spacing:-0.844px;font-family:'Liberation Sans',monospace;">81.12µs</div>
<div style="position:absolute;left:8px;top:1182px;width:1723px;height:1.2px;background:#4a4b4e;"></div>
<div style="position:absolute;left:49px;top:1181px;width:649px;height:1.33px;background:#5ab3c2;"></div>
</body></html>
